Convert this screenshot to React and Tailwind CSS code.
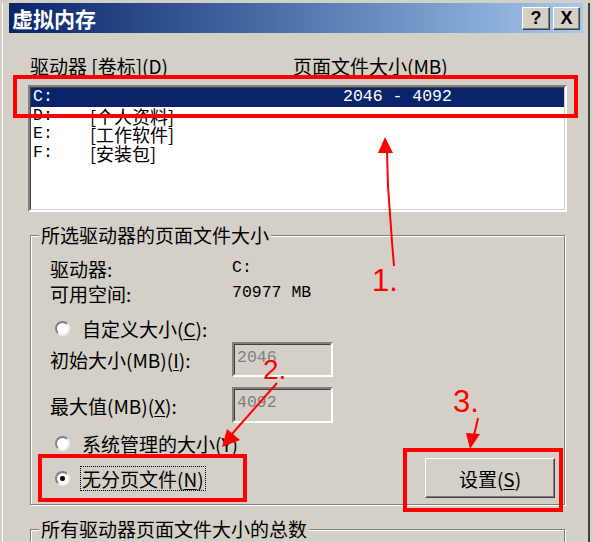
import React from "react";

const drives = [
  { d: "C:", label: "", size: "2046 - 4092", sel: true },
  { d: "D:", label: "[个人资料]", size: "" },
  { d: "E:", label: "[工作软件]", size: "" },
  { d: "F:", label: "[安装包]", size: "" },
];

// raised win2k style button
const RaisedBox = ({ className = "", children }) => (
  <div
    className={`border border-t-white border-l-white border-r-[#404040] border-b-[#404040] shadow-[inset_-1px_-1px_0_#808080] bg-[#d4d0c8] flex items-center justify-center ${className}`}
  >
    {children}
  </div>
);

const Radio = ({ checked }) => (
  <span className="flex h-[15px] w-[15px] shrink-0 items-center justify-center rounded-full border-2 border-t-[#808080] border-l-[#808080] border-r-[#eeeeee] border-b-[#eeeeee] bg-white">
    {checked && <span className="h-[5px] w-[5px] rounded-full bg-black" />}
  </span>
);

const TextBox = ({ value, className = "" }) => (
  <div
    className={`w-[101px] border-2 border-t-[#808080] border-l-[#808080] border-r-white border-b-white ${className}`}
  >
    <div className="h-full border border-t-[#404040] border-l-[#404040] border-r-[#d4d0c8] border-b-[#d4d0c8] pl-[2px] pt-[3px] text-[#808080] font-['Liberation_Mono','Noto_Sans_CJK_SC',monospace] text-[16.5px] leading-[20px]">
      {value}
    </div>
  </div>
);

const App = () => {
  return (
    <div className="relative w-[593px] h-[542px] overflow-hidden bg-[#d4d0c8] font-['Noto_Sans_CJK_SC',sans-serif] text-[19px] text-black">
      {/* Window frame */}
      <div className="ml-[2px] w-[588px] h-full border-l border-l-white border-r-2 border-r-[#404040] pl-[6px] pr-[5px]">
        {/* Title bar */}
        <div className="mt-[3px] flex h-[30px] items-center justify-between bg-gradient-to-r from-[#0a246a] to-[#a6caf0] pl-[3px] pr-[3px]">
          <span className="text-[21px] font-bold leading-none text-white">虚拟内存</span>
          <div className="flex gap-[3px]">
            <RaisedBox className="h-[23px] w-[28px]">
              <span className="font-['Liberation_Sans',sans-serif] text-[18px] font-bold leading-none">?</span>
            </RaisedBox>
            <RaisedBox className="h-[23px] w-[27px]">
              <span className="font-['Liberation_Sans',sans-serif] text-[18px] font-bold leading-none">X</span>
            </RaisedBox>
          </div>
        </div>

        {/* List header */}
        <div className="mt-[22px] ml-[21px] flex h-[20px] items-center leading-none">
          <span className="w-[263px]">
            驱动器 [卷标](<u className="underline-offset-2">D</u>)
          </span>
          <span>页面文件大小(MB)</span>
        </div>

        {/* Drive list */}
        <div className="mt-[10px] ml-[19px] h-[127px] w-[539px] border-2 border-t-[#808080] border-l-[#808080] border-r-white border-b-white">
          <div className="h-full border border-t-[#404040] border-l-[#404040] border-r-[#d4d0c8] border-b-[#d4d0c8] bg-white text-[18px]">
            {drives.map((r) => (
              <div
                key={r.d}
                className={`flex h-[18.5px] items-center leading-none ${
                  r.sel ? "bg-[#0a246a] text-white" : ""
                }`}
              >
                <span className="w-[59px] pl-[2px] font-['Liberation_Mono',monospace] text-[16.5px]">
                  {r.d}
                </span>
                <span className="w-[253px]">{r.label}</span>
                <span className="font-['Liberation_Mono',monospace] text-[16.5px]">{r.size}</span>
              </div>
            ))}
          </div>
        </div>

        {/* Selected drive group */}
        <fieldset className="mt-[12px] ml-[21px] w-[535px] border border-[#808080] shadow-[inset_1px_1px_0_#fff,1px_1px_0_#fff] pb-[6px]">
          <legend className="ml-[8px] bg-[#d4d0c8] px-[2px] leading-[22px]">
            所选驱动器的页面文件大小
          </legend>

          <div className="mt-[10px] flex h-[25px] items-center pl-[19px] leading-none">
            <span className="w-[182px]">驱动器:</span>
            <span className="font-['Liberation_Mono',monospace] text-[16.5px]">C:</span>
          </div>
          <div className="flex h-[25px] items-center pl-[19px] leading-none">
            <span className="w-[182px]">可用空间:</span>
            <span className="font-['Liberation_Mono',monospace] text-[16.5px]">70977 MB</span>
          </div>

          <div className="mt-[10px] flex h-[24px] items-center gap-[12px] pl-[24px] leading-none">
            <Radio />
            <span>
              自定义大小(<u className="underline-offset-2">C</u>):
            </span>
          </div>

          <div className="mt-[2px] flex h-[35px] items-center pl-[19px] leading-none">
            <span className="w-[182px]">
              初始大小(MB)(<u className="underline-offset-2">I</u>):
            </span>
            <TextBox value="2046" className="h-[35px]" />
          </div>
          <div className="mt-[10px] flex h-[36px] items-center pl-[19px] leading-none">
            <span className="w-[182px]">
              最大值(MB)(<u className="underline-offset-2">X</u>):
            </span>
            <TextBox value="4092" className="h-[36px]" />
          </div>

          <div className="mt-[8px] flex">
            <div className="flex flex-col pl-[24px]">
              <div className="flex h-[24px] items-center gap-[12px] leading-none">
                <Radio />
                <span>
                  系统管理的大小(<u className="underline-offset-2">Y</u>)
                </span>
              </div>
              <div className="mt-[11px] flex h-[24px] items-center gap-[10px] leading-none">
                <Radio checked />
                <span className="flex h-[25px] items-center border border-dotted border-black px-[1px]">
                  无分页文件(<u className="underline-offset-2">N</u>)
                </span>
              </div>
            </div>
            <RaisedBox className="ml-auto mr-[9px] mt-[27px] h-[40px] w-[130px]">
              <span className="leading-none">
                设置(<u className="underline-offset-2">S</u>)
              </span>
            </RaisedBox>
          </div>
        </fieldset>

        {/* Totals group (cut off) */}
        <fieldset className="mt-[13px] ml-[21px] h-[60px] w-[535px] border border-[#808080] shadow-[inset_1px_1px_0_#fff,1px_1px_0_#fff]">
          <legend className="ml-[8px] bg-[#d4d0c8] px-[2px] leading-[22px]">
            所有驱动器页面文件大小的总数
          </legend>
        </fieldset>
      </div>

      {/* Red annotations */}
      <div className="pointer-events-none absolute inset-0">
        <div className="absolute left-[13px] top-[75px] h-[43px] w-[565px] border-4 border-[#ff0000]" />
        <div className="absolute left-[38px] top-[454px] h-[48px] w-[209px] border-4 border-[#ff0000]" />
        <div className="absolute left-[403px] top-[448px] h-[64px] w-[160px] border-4 border-[#ff0000]" />

        <svg className="absolute left-0 top-0" width="593" height="542">
          <polyline
            points="394,266 392,242 390,214 388,186 387,152"
            fill="none"
            stroke="#ff0000"
            strokeWidth="2"
          />
          <polygon points="385,137 378,153 393,153" fill="#ff0000" />
          <line x1="277" y1="383" x2="232" y2="434" stroke="#ff0000" strokeWidth="2" />
          <polygon points="222,447 227,429 240,440" fill="#ff0000" />
          <polyline points="478,418 476,427 474,435" fill="none" stroke="#ff0000" strokeWidth="2" />
          <polygon points="470,449 466,433 480,434" fill="#ff0000" />
        </svg>

        <span className="absolute left-[372px] top-[265px] font-['Liberation_Sans',sans-serif] text-[31px] leading-none text-[#ff0000]">
          1.
        </span>
        <span className="absolute left-[263px] top-[356px] font-['Liberation_Sans',sans-serif] text-[28px] leading-none text-[#ff0000]">
          2.
        </span>
        <span className="absolute left-[453px] top-[386px] font-['Liberation_Sans',sans-serif] text-[31px] leading-none text-[#ff0000]">
          3.
        </span>
      </div>
    </div>
  );
};

export default App;
